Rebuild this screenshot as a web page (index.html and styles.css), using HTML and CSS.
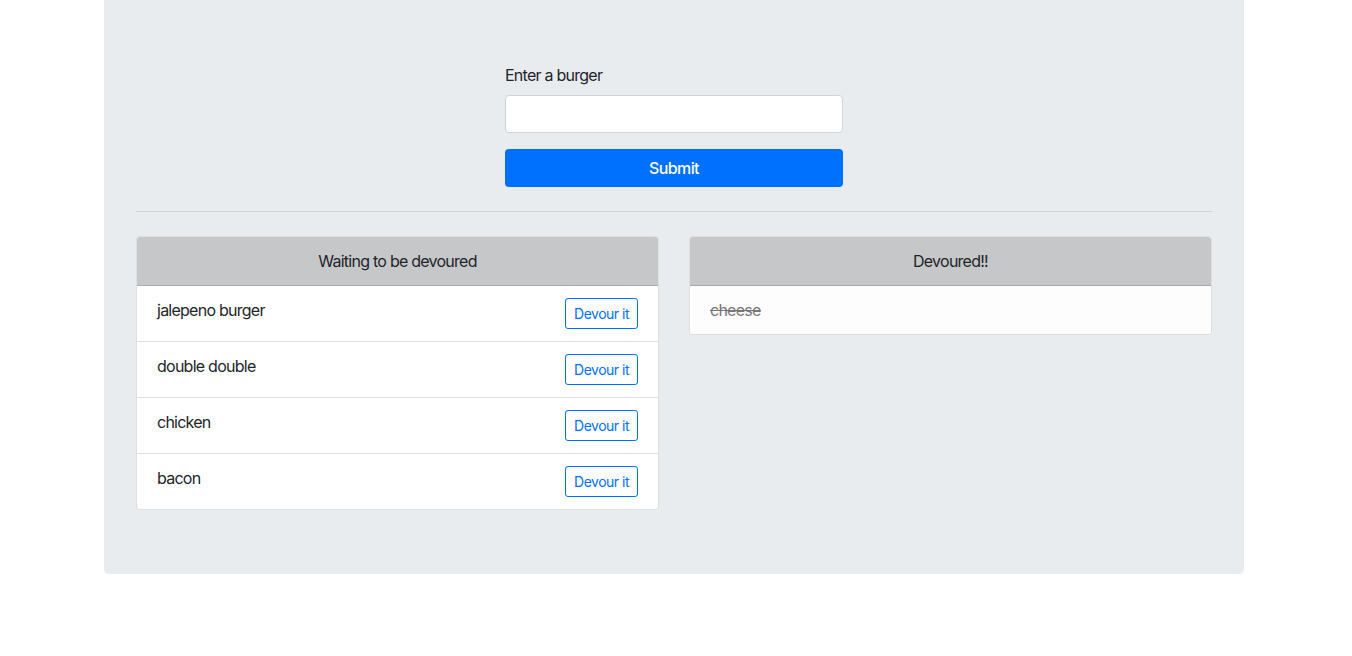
FILE: index.html
```html
<!DOCTYPE html>
<html lang="en">
<head>
<meta charset="utf-8">
<title>Burgers</title>
<link rel="stylesheet" href="styles.css">
</head>
<body>
<div class="jumbotron">
  <form class="burger-form">
    <label class="form-label" for="burger">Enter a burger</label>
    <input class="form-input" id="burger" type="text">
    <button class="btn-submit" type="button">Submit</button>
  </form>
  <hr class="divider">
  <div class="columns">
    <div class="card">
      <div class="card-header">Waiting to be devoured</div>
      <ul class="list">
        <li class="list-item"><span>jalepeno burger</span><button class="btn-devour" type="button">Devour it</button></li>
        <li class="list-item"><span>double double</span><button class="btn-devour" type="button">Devour it</button></li>
        <li class="list-item"><span>chicken</span><button class="btn-devour" type="button">Devour it</button></li>
        <li class="list-item"><span>bacon</span><button class="btn-devour" type="button">Devour it</button></li>
      </ul>
    </div>
    <div class="card card-short">
      <div class="card-header">Devoured!!</div>
      <ul class="list">
        <li class="list-item devoured"><span>cheese</span></li>
      </ul>
    </div>
  </div>
</div>
</body>
</html>
```
FILE: styles.css
```css
* { box-sizing: border-box; }
html, body { margin: 0; padding: 0; }
body {
  font-family: Inter, "Helvetica Neue", Arial, sans-serif;
  font-size: 16px;
  line-height: 24px;
  color: #212529;
  background: #fff;
  letter-spacing: -0.75px;
}
.jumbotron {
  width: 1140px;
  margin: 0 0 0 calc(50% - 572px);
  background: #e9ecef;
  border-radius: 0 0 5px 5px;
  padding: 64px 32px;
}
.burger-form {
  width: 338px;
  margin: 0 auto;
  display: flex;
  flex-direction: column;
}
.form-label {
  display: block;
  line-height: 22px;
  margin-bottom: 9px;
}
.form-input {
  height: 38px;
  border: 1px solid #ced4da;
  border-radius: 4px;
  background: #fff;
  font: inherit;
  padding: 6px 12px;
  margin-bottom: 16px;
}
.btn-submit {
  height: 38px;
  border: 0;
  border-radius: 4px;
  background: #0070ff;
  color: #fff;
  font: inherit;
  font-weight: 500;
  letter-spacing: -0.6px;
}
.divider {
  margin: 24px 0 24px;
  border: 0;
  border-top: 1px solid rgba(0, 0, 0, 0.1);
}
.columns {
  display: grid;
  grid-template-columns: 1fr 1fr;
  gap: 30px;
  align-items: start;
}
.card {
  background: #fff;
  border: 1px solid rgba(0, 0, 0, 0.125);
  border-radius: 4px;
  overflow: hidden;
}
.card-header {
  background: #c6c7c8;
  border-bottom: 1px solid #a9aaab;
  padding: 12px 20px;
  text-align: center;
}
.list {
  list-style: none;
  margin: 0;
  padding: 0;
}
.list-item {
  display: flex;
  justify-content: space-between;
  align-items: flex-start;
  padding: 12px 20px;
  border-top: 1px solid rgba(0, 0, 0, 0.125);
}
.list-item:first-child { border-top: 0; }
.btn-devour {
  height: 31px;
  padding: 0 8px;
  border: 1px solid #0070ff;
  border-radius: 3px;
  background: #fff;
  color: #0070ff;
  font: inherit;
  font-size: 14px;
  letter-spacing: -0.5px;
}
.devoured {
  background: #fdfdfd;
  color: #777;
  text-decoration: line-through;
}
```
